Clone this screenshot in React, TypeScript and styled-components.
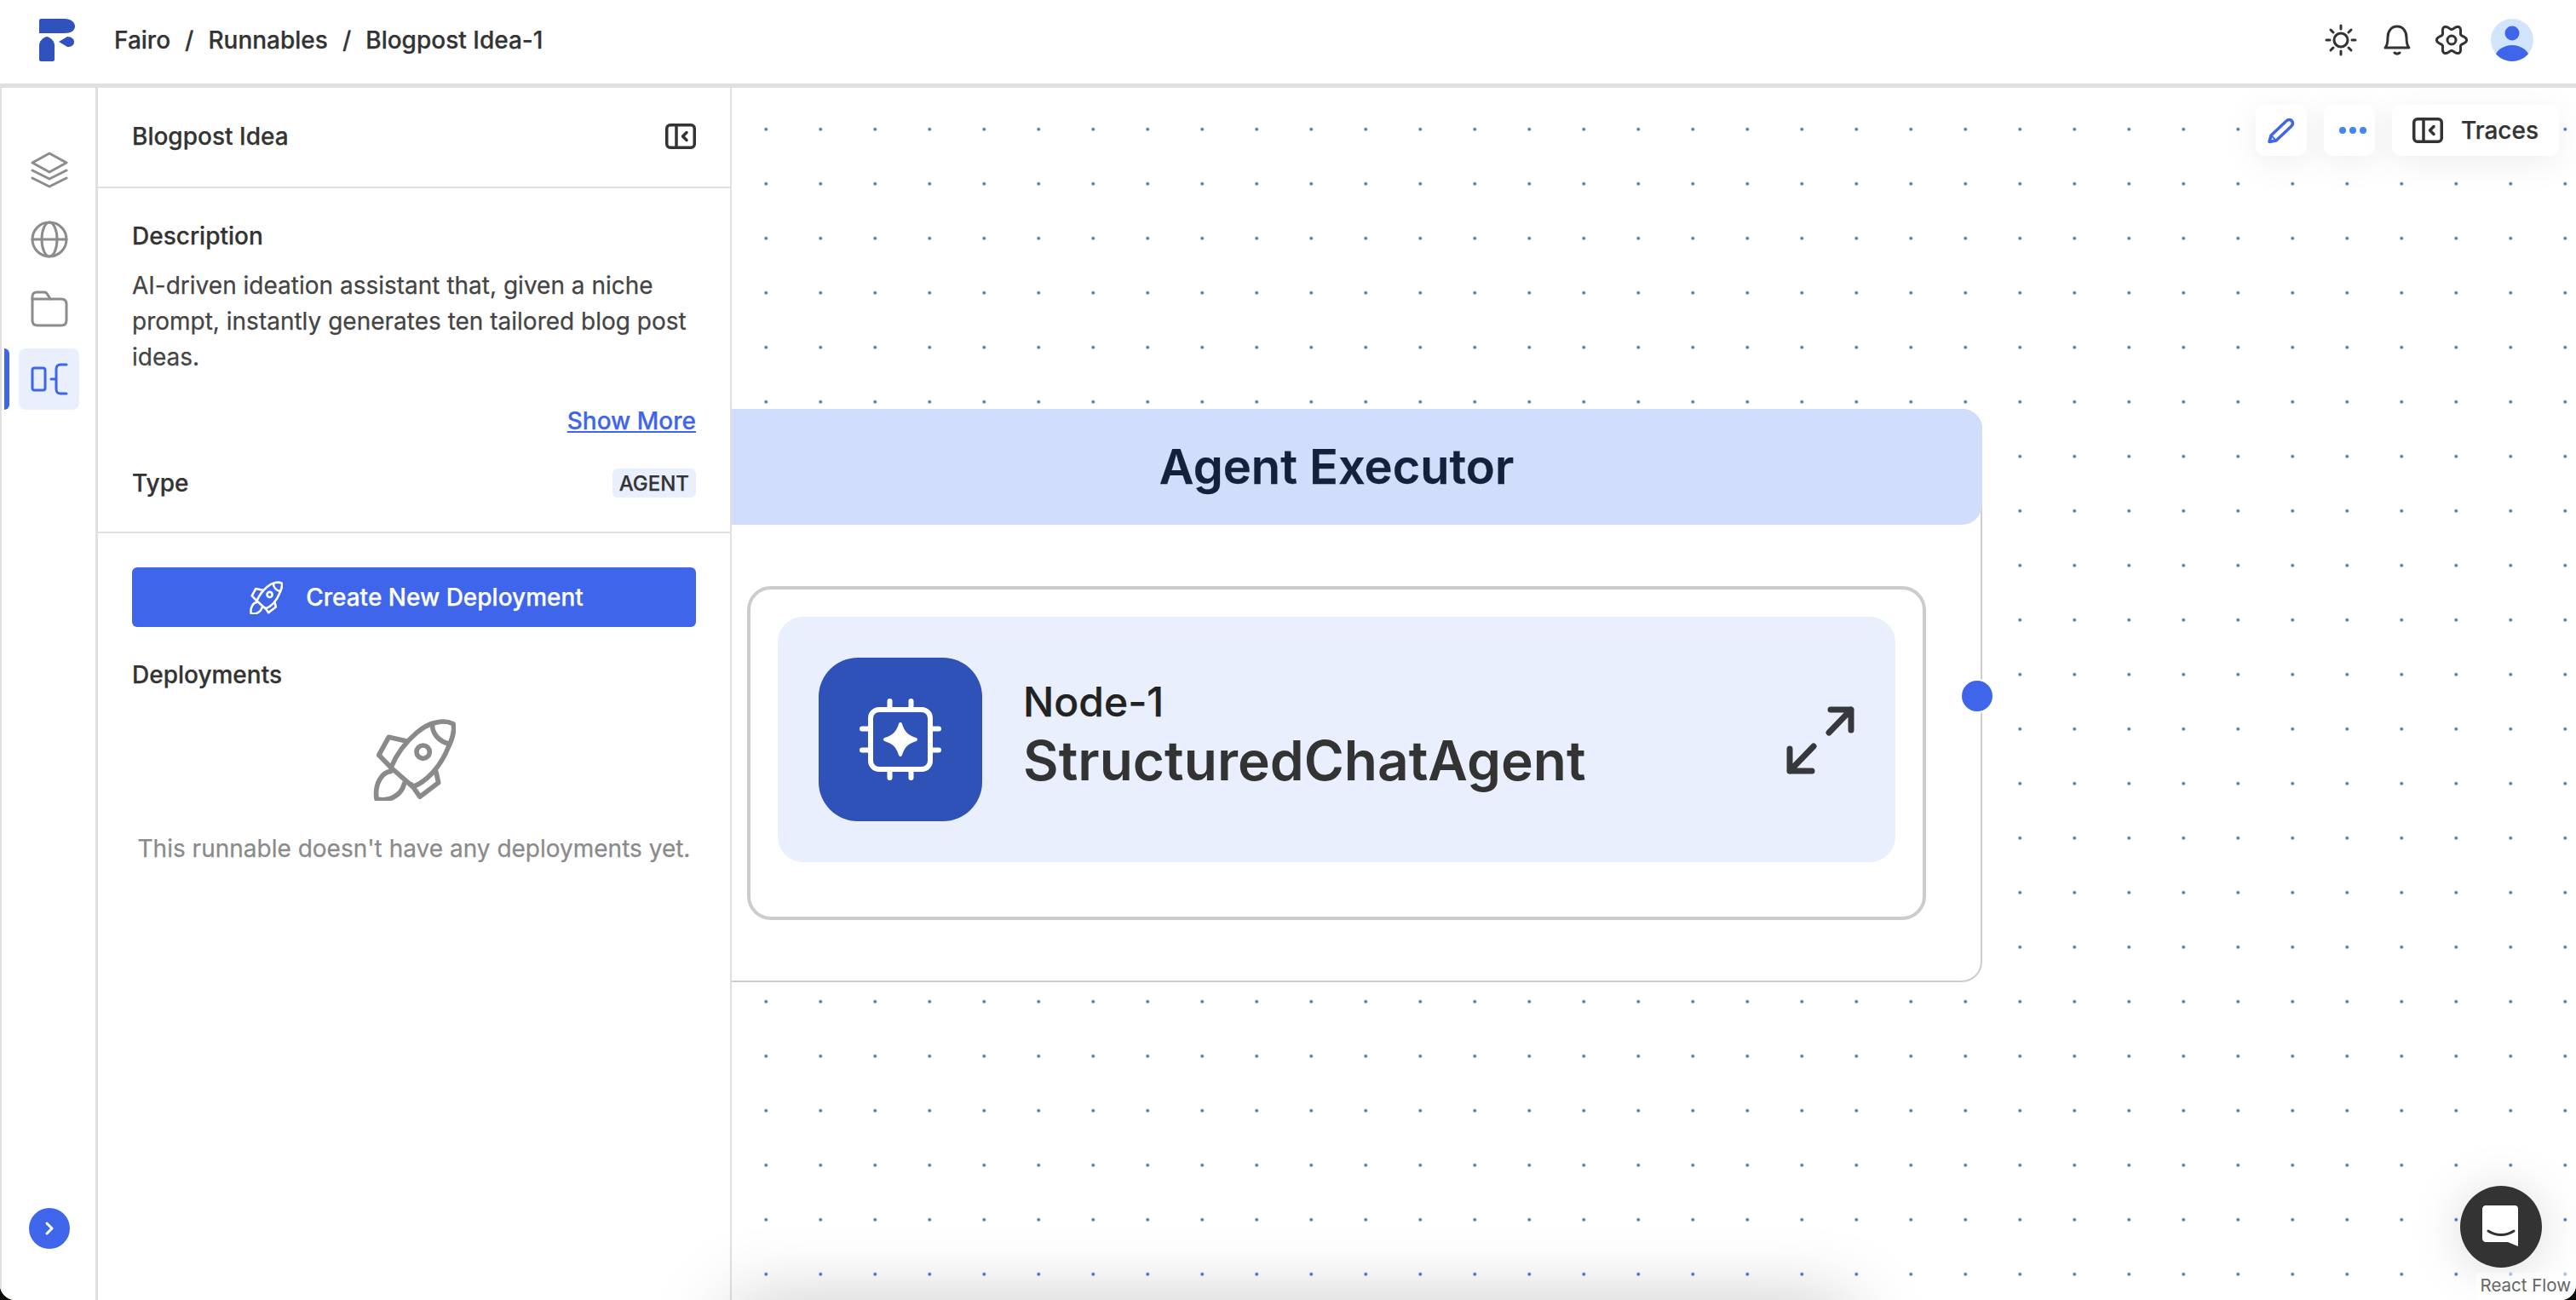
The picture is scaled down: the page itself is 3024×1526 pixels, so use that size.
import React from 'react';
import styled, { createGlobalStyle } from 'styled-components';

const BLUE = '#3f66ea';
const LINE = '#e0e0e0';
const INK = '#333333';

const GlobalStyle = createGlobalStyle`
  html, body, #root { margin: 0; padding: 0; width: 100%; height: 100%; background: #0c0a09; }
  * { box-sizing: border-box; }
  body { font-family: Inter, "Noto Sans", sans-serif; color: ${INK}; -webkit-text-stroke: 0.25px currentColor; }
`;

const Page = styled.div`
  position: relative;
  width: 3024px;
  height: 1526px;
  display: flex;
  flex-direction: column;
  background: #fff;
  overflow: hidden;
  border-radius: 0 0 18px 18px;
`;

const Header = styled.header`
  height: 103px;
  flex: none;
  display: flex;
  align-items: center;
  padding: 0 50px 5px 46px;
  border-bottom: 5px solid ${LINE};
  background: #fff;
`;

const Crumbs = styled.nav`
  display: flex;
  align-items: center;
  gap: 17px;
  margin-left: 46px;
  font-size: 28px;
  line-height: 36px;
  font-weight: 500;
`;

const HeaderIcons = styled.div`
  margin-left: auto;
  display: flex;
  align-items: center;
  gap: 26px;
`;

const HeaderIcon = styled.svg`
  width: 38px;
  height: 38px;
  fill: none;
  stroke: ${INK};
  stroke-width: 3;
  stroke-linecap: round;
  stroke-linejoin: round;
`;

const SunIcon = styled(HeaderIcon)`
  margin-right: 2px;
`;

const Avatar = styled.svg`
  width: 50px;
  height: 50px;
  margin-left: 1px;
`;

const Body = styled.div`
  position: relative;
  flex: 1;
  min-height: 0;
  display: flex;
`;

const Rail = styled.aside`
  width: 115px;
  flex: none;
  display: flex;
  flex-direction: column;
  align-items: center;
  padding-top: 60px;
  border-left: 2px solid ${LINE};
  border-right: 3px solid ${LINE};
  background: #fff;
`;

const RailItem = styled.div<{ $active?: boolean }>`
  position: relative;
  width: 71px;
  height: 72px;
  margin-left: 1px;
  margin-bottom: ${(p) => (p.$active ? 0 : 10)}px;
  display: flex;
  align-items: center;
  justify-content: center;
  border-radius: 8px;
  background: ${(p) => (p.$active ? '#e9effd' : 'transparent')};
  color: ${(p) => (p.$active ? BLUE : '#8c8c8c')};

  ${(p) =>
    p.$active &&
    `&::before {
      content: '';
      position: absolute;
      left: -17px;
      top: 0;
      width: 6px;
      height: 72px;
      border-radius: 0 6px 6px 0;
      background: ${BLUE};
    }`}
`;

const RailIcon = styled.svg`
  width: 44px;
  height: 44px;
  fill: none;
  stroke: currentColor;
  stroke-width: 3;
  stroke-linecap: round;
  stroke-linejoin: round;
`;

const RailToggle = styled.button`
  margin: auto 0 60px 1px;
  width: 48px;
  height: 48px;
  padding: 0;
  border: 0;
  border-radius: 50%;
  background: ${BLUE};
  display: flex;
  align-items: center;
  justify-content: center;
`;

const Panel = styled.section`
  position: relative;
  z-index: 2;
  width: 744px;
  flex: none;
  display: flex;
  flex-direction: column;
  border-right: 2px solid ${LINE};
  background: #fff;
`;

const PanelHead = styled.div`
  height: 118px;
  flex: none;
  display: flex;
  align-items: center;
  justify-content: space-between;
  padding: 0 40px 3px;
  border-bottom: 2px solid ${LINE};
`;

const PanelSection = styled.div<{ $divided?: boolean }>`
  padding: 40px 40px ${(p) => (p.$divided ? 40 : 0)}px;
  border-bottom: ${(p) => (p.$divided ? `2px solid ${LINE}` : '0')};
`;

const Label = styled.div`
  font-size: 28px;
  line-height: 32px;
  font-weight: 500;
`;

const Paragraph = styled.p`
  margin: 21px 0 0;
  font-size: 28px;
  line-height: 42px;
  color: #444444;
`;

const ShowMore = styled.a`
  display: block;
  margin-top: 38px;
  text-align: right;
  font-size: 28px;
  line-height: 32px;
  font-weight: 500;
  color: ${BLUE};
  text-decoration: underline;
`;

const TypeRow = styled.div`
  margin-top: 40px;
  height: 34px;
  display: flex;
  align-items: center;
  justify-content: space-between;
`;

const Chip = styled.span`
  height: 34px;
  padding: 0 8px;
  display: flex;
  align-items: center;
  border-radius: 6px;
  background: #e9effd;
  font-size: 24px;
  font-weight: 500;
`;

const PrimaryButton = styled.button`
  width: 662px;
  height: 70px;
  padding: 0 0 0 6px;
  border: 0;
  border-radius: 6px;
  background: ${BLUE};
  color: #fff;
  font: 500 28px Inter, sans-serif;
  display: flex;
  align-items: center;
  justify-content: center;
  gap: 27px;
`;

const SectionTitle = styled(Label)`
  margin-top: 40px;
`;

const EmptyState = styled.div`
  margin-top: 35px;
  display: flex;
  flex-direction: column;
  align-items: center;
  gap: 40px;
  color: #8a8a8a;
  font-size: 28px;
  line-height: 32px;
`;

const Rocket = styled.svg<{ $size: number; $stroke: number }>`
  width: ${(p) => p.$size}px;
  height: ${(p) => p.$size}px;
  flex: none;
  fill: none;
  stroke: currentColor;
  stroke-width: ${(p) => p.$stroke};
  stroke-linecap: round;
  stroke-linejoin: round;
`;

const Canvas = styled.main`
  position: relative;
  flex: 1;
  overflow: hidden;
  background-color: #fff;
  background-image: radial-gradient(circle, ${BLUE} 1.4px, transparent 2.2px);
  background-size: 64px 64px;
  background-position: 8.3px 16.7px;
`;

const GroupNode = styled.div`
  position: absolute;
  left: -48px;
  top: 377px;
  width: 1516px;
  height: 673px;
  display: flex;
  flex-direction: column;
  align-items: center;
  border: 2px solid #cccccc;
  border-radius: 24px;
  background: #fff;
`;

const GroupTitle = styled.h2`
  width: calc(100% + 4px);
  height: 136px;
  margin: -2px -2px 0;
  flex: none;
  display: flex;
  align-items: center;
  justify-content: center;
  border-radius: 24px;
  background: #d0ddfb;
  color: #14213d;
  font-size: 56px;
  font-weight: 600;
`;

const NodeFrame = styled.div`
  margin-top: 72px;
  width: 1384px;
  height: 392px;
  padding: 32px 32px 64px;
  border: 4px solid #cccccc;
  border-radius: 28px;
`;

const NodeCard = styled.div`
  height: 288px;
  display: flex;
  align-items: center;
  gap: 48px;
  padding: 0 45px 0 48px;
  border-radius: 30px;
  background: #e9effd;
`;

const NodeIcon = styled.div`
  width: 192px;
  height: 192px;
  flex: none;
  display: flex;
  align-items: center;
  justify-content: center;
  border-radius: 46px;
  background: #2f52b9;
`;

const NodeText = styled.div`
  flex: 1;
  display: flex;
  flex-direction: column;
  padding-bottom: 9px;
`;

const NodeName = styled.div`
  font-size: 48px;
  line-height: 56px;
  font-weight: 500;
  color: #222222;
`;

const NodeType = styled.div`
  margin-top: 3px;
  font-size: 64px;
  line-height: 76px;
  font-weight: 600;
  -webkit-text-stroke: 0;
`;

const Handle = styled.span`
  position: absolute;
  right: -16px;
  top: 50%;
  width: 40px;
  height: 40px;
  margin-top: -20px;
  border: 2px solid #fff;
  border-radius: 50%;
  background: ${BLUE};
`;

const Toolbar = styled.div`
  position: absolute;
  top: 20px;
  right: 20px;
  display: flex;
  gap: 20px;
`;

const ToolButton = styled.button`
  height: 60px;
  min-width: 60px;
  padding: 0;
  border: 0;
  border-radius: 10px;
  background: #fff;
  box-shadow: 0 8px 40px rgba(0, 0, 0, 0.07);
  display: flex;
  align-items: center;
  justify-content: center;
`;

const TracesButton = styled(ToolButton)`
  width: 196px;
  gap: 21px;
  font: 500 28px Inter, sans-serif;
  color: ${INK};
`;

const ChatBubble = styled.button`
  position: absolute;
  right: 40px;
  bottom: 38px;
  width: 96px;
  height: 96px;
  padding: 0;
  border: 0;
  border-radius: 50%;
  background: #333333;
  box-shadow: 0 4px 60px rgba(0, 0, 0, 0.15);
  display: flex;
  align-items: center;
  justify-content: center;
`;

const Attribution = styled.div`
  position: absolute;
  right: 6px;
  bottom: 0;
  padding: 0 0 2px 4px;
  background: rgba(255, 255, 255, 0.5);
  font-size: 20.5px;
  line-height: 30px;
  color: #666666;
  -webkit-text-stroke: 0;
`;

// shadow of something sitting just under the fold; it falls over the panel too
const FoldShadow = styled.div`
  position: absolute;
  z-index: 3;
  left: 860px;
  bottom: -69px;
  width: 1310px;
  height: 60px;
  box-shadow: 0 0 90px rgba(0, 0, 0, 0.28);
`;

const LogoMark = styled.svg`
  width: 42px;
  height: 50px;
  flex: none;
`;

function IconPanelToggle({ size, color }: { size: number; color: string }) {
  return (
    <svg width={size} height={(size * 30) / 36} viewBox="0 0 36 30" fill="none" stroke={color} strokeWidth="3.5" strokeLinecap="round" strokeLinejoin="round">
      <rect x="1.75" y="1.75" width="32.5" height="26.5" rx="4" />
      <path d="M13 1.75v26.5M25 10.5l-4.5 4.5 4.5 4.5" />
    </svg>
  );
}

function RocketShape() {
  return (
    <>
      <path d="M332 58C300 42 250 50 205 88C165 122 130 170 113 212L190 280C235 262 285 215 315 140C332 105 338 80 332 58Z" />
      <path d="M258 60C258 90 280 122 320 128" />
      <circle cx="226" cy="157" r="23" />
      <path d="M165 118L105 105L70 168L113 212" />
      <path d="M272 228L280 265L215 315L185 272" />
      <path d="M113 225C80 228 55 270 62 322C105 335 150 310 160 268" />
    </>
  );
}

const gearPath = Array.from({ length: 73 }, (_, i) => {
  const a = (i * 5 * Math.PI) / 180;
  const r = 15 + 2.6 * Math.cos(6 * a + Math.PI / 2 + Math.PI / 2);
  const angle = a - Math.PI / 2;
  return `${i === 0 ? 'M' : 'L'}${(19 + r * Math.cos(angle)).toFixed(2)} ${(19 + r * Math.sin(angle)).toFixed(2)}`;
}).join('') + 'Z';

export default function App(): JSX.Element {
  return (
    <>
      <GlobalStyle />
      <Page>
        <Header>
          <LogoMark viewBox="0 0 42 50">
            <path fill="#2f52bc" d="M2 0H30C37 0 42 4 42 9C42 14 37 17 30 17H0V2C0 1 1 0 2 0Z" />
            <path fill="#2f52bc" d="M0 31C0 27 4 22 9 21C14 22 18 27 18 31V48C18 49 17 50 16 50H2C1 50 0 49 0 48Z" />
            <path fill="#2f52bc" d="M23 27L33 21C38 21 41 24 41 27C41 31 38 33 33 33Z" />
          </LogoMark>
          <Crumbs>
            <span>Fairo</span>
            <span>/</span>
            <span>Runnables</span>
            <span>/</span>
            <span>Blogpost Idea-1</span>
          </Crumbs>
          <HeaderIcons>
            <SunIcon viewBox="0 0 38 38">
              <circle cx="19" cy="19" r="8" />
              <path d="M19 2v4M19 32v4M2 19h4M32 19h4M7 7l3 3M28 28l3 3M31 7l-3 3M10 28l-3 3" />
            </SunIcon>
            <HeaderIcon viewBox="0 0 38 38">
              <path d="M5 28C8 25 8 21 8 16C8 9 12 3 19 3C26 3 30 9 30 16C30 21 30 25 33 28Z" />
              <path d="M16 34C18 35.5 20 35.5 22 34" />
            </HeaderIcon>
            <HeaderIcon viewBox="0 0 38 38">
              <path d={gearPath} />
              <circle cx="19" cy="19" r="5" />
            </HeaderIcon>
            <Avatar viewBox="0 0 50 50">
              <defs>
                <clipPath id="avatar-clip">
                  <circle cx="25" cy="25" r="25" />
                </clipPath>
              </defs>
              <circle cx="25" cy="25" r="25" fill="#d0e5fc" />
              <circle cx="25" cy="17" r="8.5" fill={BLUE} />
              <ellipse cx="25" cy="46" rx="20" ry="15" fill={BLUE} clipPath="url(#avatar-clip)" />
            </Avatar>
          </HeaderIcons>
        </Header>
        <Body>
          <Rail>
            <RailItem>
              <RailIcon viewBox="0 0 44 44">
                <path d="M22 3L42 14L22 25L2 14Z" />
                <path d="M2 23L22 33L42 23" />
                <path d="M2 32L22 42L42 32" />
              </RailIcon>
            </RailItem>
            <RailItem>
              <RailIcon viewBox="0 0 44 44">
                <circle cx="22" cy="22" r="20" />
                <ellipse cx="22" cy="22" rx="9" ry="20" />
                <path d="M2 22H42" />
              </RailIcon>
            </RailItem>
            <RailItem>
              <RailIcon viewBox="0 0 44 44">
                <path d="M2 10V35C2 39 4 41 8 41H36C40 41 42 39 42 35V16C42 12 40 10 36 10H23L20 5C19 3 18 2 16 2H7C4 2 2 4 2 7Z" />
                <path d="M2 10H23" />
              </RailIcon>
            </RailItem>
            <RailItem $active>
              <RailIcon viewBox="0 0 44 44">
                <rect x="2" y="9" width="15" height="26" rx="2.5" />
                <path d="M24 22H30M42 5H35C32 5 30 7 30 10V34C30 37 32 39 35 39H42" />
              </RailIcon>
            </RailItem>
            <RailToggle aria-label="Expand">
              <svg width="14" height="18" viewBox="0 0 14 18" fill="none" stroke="#fff" strokeWidth="3" strokeLinecap="round" strokeLinejoin="round">
                <path d="M4 3l6 6-6 6" />
              </svg>
            </RailToggle>
          </Rail>
          <Panel>
            <PanelHead>
              <Label>Blogpost Idea</Label>
              <IconPanelToggle size={36} color={INK} />
            </PanelHead>
            <PanelSection $divided>
              <Label>Description</Label>
              <Paragraph>
                AI-driven ideation assistant that, given a niche prompt, instantly generates ten tailored blog post ideas.
              </Paragraph>
              <ShowMore>Show More</ShowMore>
              <TypeRow>
                <Label>Type</Label>
                <Chip>AGENT</Chip>
              </TypeRow>
            </PanelSection>
            <PanelSection>
              <PrimaryButton>
                <Rocket $size={39} $stroke={19} viewBox="50 38 291 291">
                  <RocketShape />
                </Rocket>
                Create New Deployment
              </PrimaryButton>
              <SectionTitle>Deployments</SectionTitle>
              <EmptyState>
                <Rocket $size={97} $stroke={17} viewBox="50 38 291 291">
                  <RocketShape />
                </Rocket>
                This runnable doesn't have any deployments yet.
              </EmptyState>
            </PanelSection>
          </Panel>
          <Canvas>
            <GroupNode>
              <GroupTitle>Agent Executor</GroupTitle>
              <NodeFrame>
                <NodeCard>
                  <NodeIcon>
                    <svg width="100" height="100" viewBox="0 0 100 100" fill="none" stroke="#fff" strokeWidth="6" strokeLinecap="round">
                      <rect x="15" y="15" width="70" height="70" rx="10" />
                      <path d="M37.5 5V15M62.5 5V15M37.5 85V95M62.5 85V95M5 37.5H15M5 62.5H15M85 37.5H95M85 62.5H95" />
                      <path fill="#fff" strokeWidth="4" strokeLinejoin="round" d="M50 32C53 42 58 47 68 50C58 53 53 58 50 68C47 58 42 53 32 50C42 47 47 42 50 32Z" />
                    </svg>
                  </NodeIcon>
                  <NodeText>
                    <NodeName>Node-1</NodeName>
                    <NodeType>StructuredChatAgent</NodeType>
                  </NodeText>
                  <svg width="85" height="85" viewBox="0 0 85 85" fill="none" stroke="#37383c" strokeWidth="7" strokeLinecap="round" strokeLinejoin="round">
                    <path d="M54 7H78V31M78 7L52 34" />
                    <path d="M6 53V79H32M6 79L34 50" />
                  </svg>
                </NodeCard>
              </NodeFrame>
              <Handle />
            </GroupNode>
            <Toolbar>
              <ToolButton aria-label="Edit">
                <svg width="60" height="60" viewBox="0 0 60 60" fill="none" stroke={BLUE} strokeWidth="3.5" strokeLinecap="round" strokeLinejoin="round">
                  <path d="M16 43.5L18 36L36 19C38 17 41 17 42.5 19C44 21 44 23 42 25L24 42Z" />
                  <path d="M18 36L24 42" strokeWidth="2" />
                </svg>
              </ToolButton>
              <ToolButton aria-label="More">
                <svg width="60" height="60" viewBox="0 0 60 60" fill="#4285f4">
                  <circle cx="22" cy="30" r="4" />
                  <circle cx="34" cy="30" r="4" />
                  <circle cx="46" cy="30" r="4" />
                </svg>
              </ToolButton>
              <TracesButton>
                <IconPanelToggle size={36} color={INK} />
                Traces
              </TracesButton>
            </Toolbar>
            <ChatBubble aria-label="Chat">
              <svg width="44" height="50" viewBox="0 0 44 50">
                <path fill="#fff" d="M4 0H38C41 0 42 2 42 4V48L30 43H4C2 43 0 41 0 39V4C0 2 2 0 4 0Z" />
                <path fill="none" stroke="#333" strokeWidth="3" strokeLinecap="round" d="M7 30C16 36 28 36 37 30" />
              </svg>
            </ChatBubble>
            <Attribution>React Flow</Attribution>
          </Canvas>
          <FoldShadow />
        </Body>
      </Page>
    </>
  );
}
